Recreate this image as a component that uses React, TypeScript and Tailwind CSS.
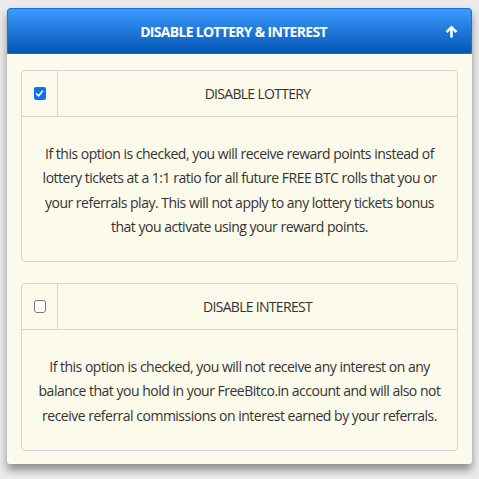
const sections = [
  {
    title: "DISABLE LOTTERY",
    checked: true,
    text: [
      "If this option is checked, you will receive reward points instead of",
      "lottery tickets at a 1:1 ratio for all future FREE BTC rolls that you or",
      "your referrals play. This will not apply to any lottery tickets bonus",
      "that you activate using your reward points.",
    ],
  },
  {
    title: "DISABLE INTEREST",
    checked: false,
    text: [
      "If this option is checked, you will not receive any interest on any",
      "balance that you hold in your FreeBitco.in account and will also not",
      "receive referral commissions on interest earned by your referrals.",
    ],
  },
];

function Checkbox({ checked }: { checked: boolean }) {
  if (checked) {
    return (
      <div className="w-[12px] h-[13px] rounded-[2px] bg-[#0b72f0] flex items-center justify-center">
        <svg viewBox="0 0 12 12" className="w-[9px] h-[9px]">
          <path d="M2 6.5 L4.8 9.2 L10 2.8" stroke="white" strokeWidth="2.2" fill="none" strokeLinecap="round" strokeLinejoin="round" />
        </svg>
      </div>
    );
  }
  return <div className="w-[12px] h-[13px] rounded-[3px] border border-[#767676] bg-white" />;
}

export default function App() {
  return (
    <div className="w-[479px] h-[479px] bg-[#ebebeb] pt-[8px] px-[7px] font-['Open_Sans',sans-serif]">
      <div className="bg-[#fcfaeb] rounded-[3px] shadow-[0_6px_8px_rgba(0,0,0,0.4)] overflow-hidden">
        {/* Header */}
        <div className="relative h-[46px] pr-[12px] bg-gradient-to-b from-[#3a9bff] to-[#0256b4] border border-[#1a6fd0] rounded-t-[3px] flex items-center justify-center">
          <span className="text-white font-bold text-[14px] tracking-[-0.7px]">DISABLE LOTTERY &amp; INTEREST</span>
          {/* solid up arrow */}
          <svg viewBox="0 0 14 14" className="absolute right-[13px] top-[16px] w-[13px] h-[13px]">
            <path d="M7 0.5 L13.3 6.8 L11.4 8.7 L8.4 5.7 L8.4 13.5 L5.6 13.5 L5.6 5.7 L2.6 8.7 L0.7 6.8 Z" fill="white" />
          </svg>
        </div>

        <div className="px-[14px] pt-[16px] pb-[13px] flex flex-col gap-[21px]">
          {sections.map((s) => (
            <div key={s.title} className="border border-[#d4d4d4] rounded-[4px]">
              <div className="flex h-[46px] border-b border-[#d4d4d4]">
                <div className="w-[36px] border-r border-[#d4d4d4] flex items-center justify-center">
                  <Checkbox checked={s.checked} />
                </div>
                <div className="flex-1 flex items-center justify-center text-[14px] text-[#333] tracking-[-0.7px]">
                  {s.title}
                </div>
              </div>
              <div className="pt-[25px] pb-[22px] text-center text-[14px] leading-[24.3px] text-[#333] tracking-[-0.5px]">
                {s.text.map((l) => (
                  <div key={l}>{l}</div>
                ))}
              </div>
            </div>
          ))}
        </div>
      </div>
    </div>
  );
}
